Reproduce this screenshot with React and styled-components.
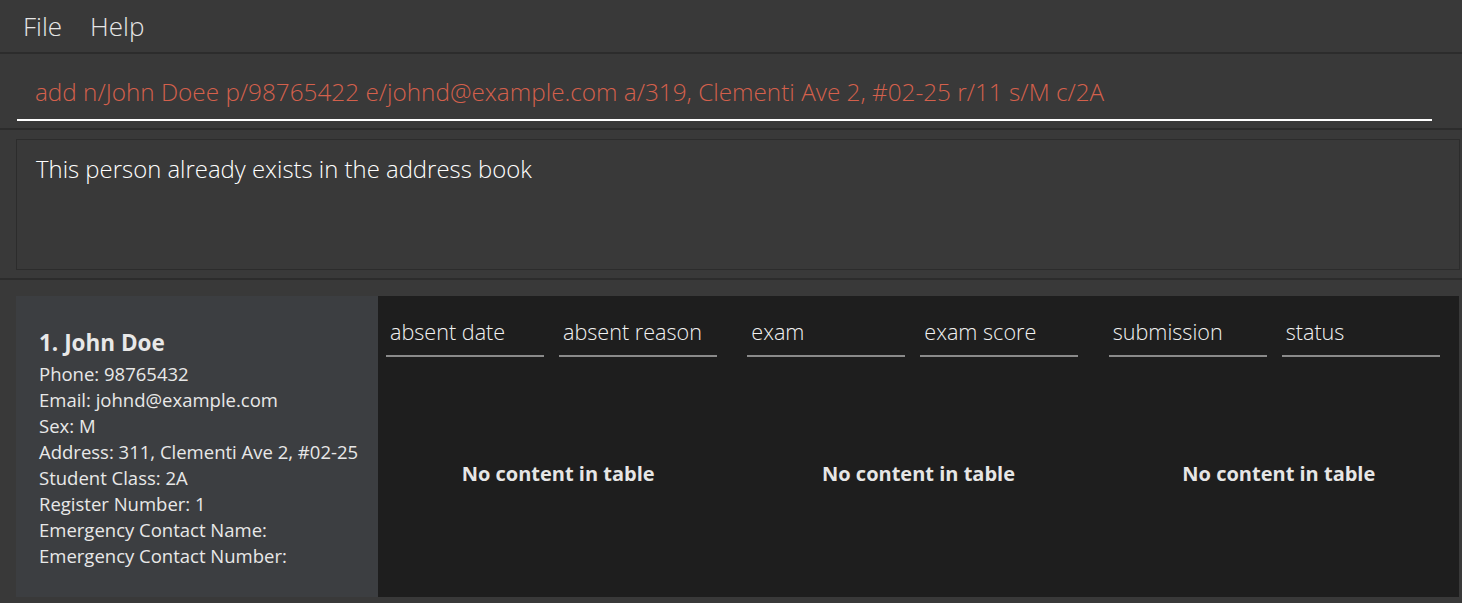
import React from "react";
import styled, { createGlobalStyle } from "styled-components";

const GlobalStyle = createGlobalStyle`
  html, body {
    margin: 0;
    padding: 0;
    background: #393939;
  }
  body {
    font-family: "Open Sans", "Noto Sans", sans-serif;
  }
`;

const Window = styled.div`
  width: 100%;
  height: 100vh;
  display: flex;
  flex-direction: column;
  background: #393939;
  overflow: hidden;
`;

const MenuBar = styled.div`
  height: 52px;
  display: flex;
  align-items: center;
  gap: 28px;
  padding-left: 23px;
  border-bottom: 2px solid #2c2c2c;
`;

const MenuItem = styled.span`
  font-size: 26px;
  font-weight: 300;
  color: #e6e6e6;
`;

const CommandPane = styled.div`
  height: 76px;
  padding: 0 30px 7px 17px;
  display: flex;
  align-items: flex-end;
  box-sizing: border-box;
  border-bottom: 2px solid #2c2c2c;
`;

const CommandInput = styled.div`
  flex: 1;
  height: 54px;
  box-sizing: border-box;
  display: flex;
  align-items: center;
  padding: 0 0 4px 18px;
  border-bottom: 2px solid #ffffff;
  font-size: 24.3px;
  font-weight: 300;
  color: #d4604c;
  white-space: nowrap;
`;

const ResultPane = styled.div`
  padding: 9px 2px 8px 16px;
  border-bottom: 2px solid #2c2c2c;
`;

const ResultBox = styled.div`
  height: 131px;
  box-sizing: border-box;
  border: 1px solid #2c2c2c;
  padding: 12px 19px;
  font-size: 23.9px;
  font-weight: 300;
  color: #ffffff;
`;

const Main = styled.div`
  flex: 1;
  display: flex;
  padding: 16px 3px 6px 16px;
  min-height: 0;
`;

const PersonCard = styled.div`
  width: 362px;
  background: #3c3e41;
  padding: 31px 0 0 23px;
  box-sizing: border-box;
  color: #e8e8e8;
`;

const Name = styled.div`
  font-size: 22.5px;
  font-weight: 700;
  line-height: 32px;
  margin-bottom: 2px;
`;

const Field = styled.div`
  font-size: 18.5px;
  line-height: 26px;
  white-space: nowrap;
`;

const Tables = styled.div`
  flex: 1;
  display: grid;
  grid-template-columns: repeat(3, 1fr);
  background: #1e1e1e;
`;

const Table = styled.div`
  display: flex;
  flex-direction: column;
  padding: 17px 0 0 ${(p) => p.$inset}px;
`;

const HeaderRow = styled.div`
  display: grid;
  grid-template-columns: 158px 158px;
  gap: 15px;
`;

const HeaderCell = styled.div`
  height: 44px;
  padding: 4px 0 0 4px;
  box-sizing: border-box;
  border-bottom: 2px solid #8a8a8a;
  font-size: 21.6px;
  font-weight: 300;
  color: #f2f2f2;
  white-space: nowrap;
`;

const Empty = styled.div`
  flex: 1;
  display: flex;
  align-items: center;
  justify-content: center;
  padding-right: ${(p) => p.$inset}px;
  padding-bottom: 8px;
  font-size: 20px;
  font-weight: 700;
  color: #e6e6e6;
`;

const tables = [
  { cols: ["absent date", "absent reason"], inset: 8 },
  { cols: ["exam", "exam score"], inset: 9 },
  { cols: ["submission", "status"], inset: 10 },
];

const fields = [
  "Phone: 98765432",
  "Email: johnd@example.com",
  "Sex: M",
  "Address: 311, Clementi Ave 2, #02-25",
  "Student Class: 2A",
  "Register Number: 1",
  "Emergency Contact Name:",
  "Emergency Contact Number:",
];

export default function App() {
  return (
    <>
      <GlobalStyle />
      <Window>
        <MenuBar>
          <MenuItem>File</MenuItem>
          <MenuItem>Help</MenuItem>
        </MenuBar>
        <CommandPane>
          <CommandInput>
            add n/John Doee p/98765422 e/johnd@example.com a/319, Clementi Ave 2, #02-25 r/11 s/M c/2A
          </CommandInput>
        </CommandPane>
        <ResultPane>
          <ResultBox>This person already exists in the address book</ResultBox>
        </ResultPane>
        <Main>
          <PersonCard>
            <Name>1. John Doe</Name>
            {fields.map((f) => (
              <Field key={f}>{f}</Field>
            ))}
          </PersonCard>
          <Tables>
            {tables.map((t) => (
              <Table key={t.cols[0]} $inset={t.inset}>
                <HeaderRow>
                  {t.cols.map((c) => (
                    <HeaderCell key={c}>{c}</HeaderCell>
                  ))}
                </HeaderRow>
                <Empty $inset={t.inset}>No content in table</Empty>
              </Table>
            ))}
          </Tables>
        </Main>
      </Window>
    </>
  );
}
